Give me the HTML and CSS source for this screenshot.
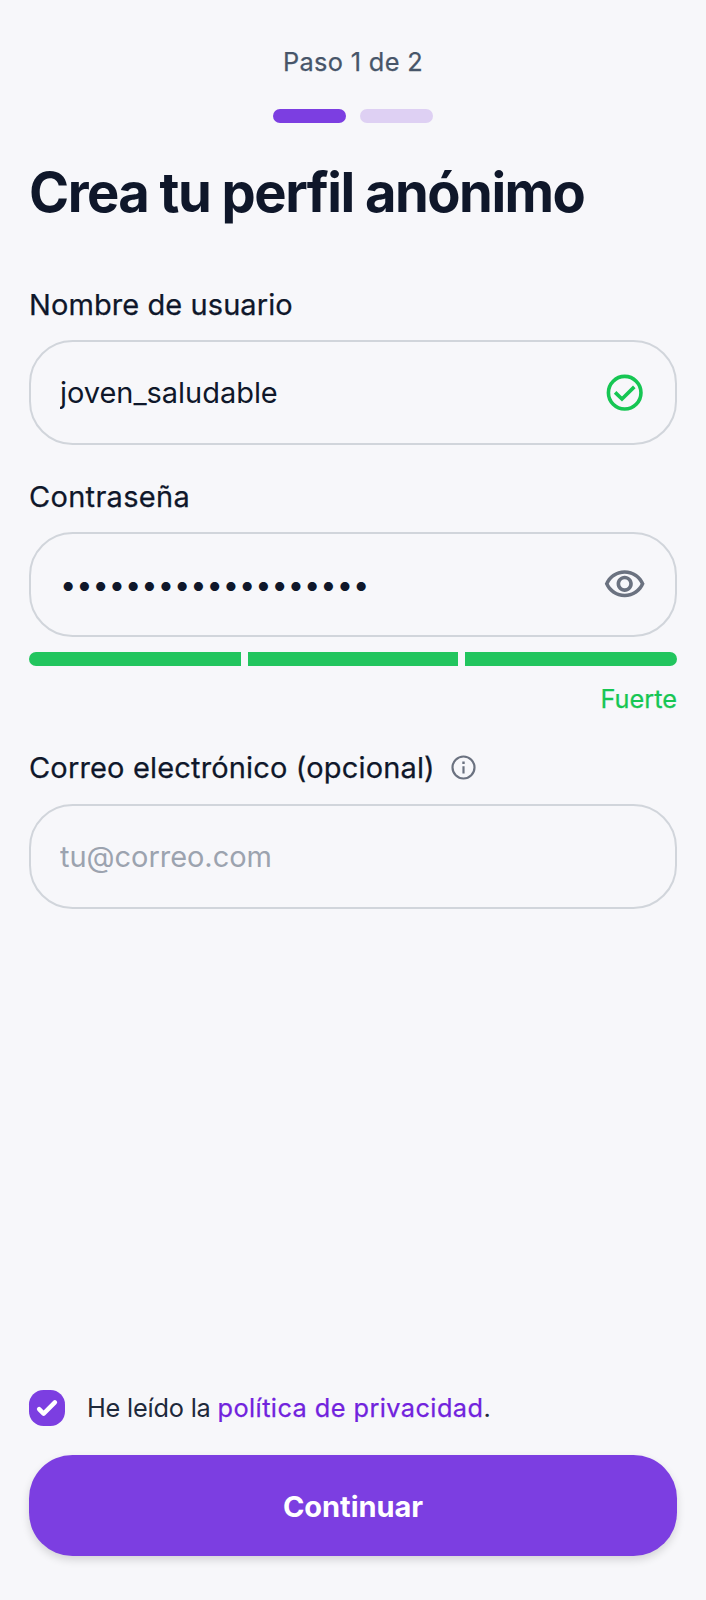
FILE: index.html
```html
<!DOCTYPE html>
<html lang="es">
<head>
<meta charset="utf-8">
<title>Crea tu perfil anónimo</title>
<link rel="stylesheet" href="styles.css">
</head>
<body>
<main class="screen">
  <header class="steps">
    <p class="steps-label">Paso 1 de 2</p>
    <div class="steps-bars"><i class="step active"></i><i class="step"></i></div>
  </header>
  <h1 class="title">Crea tu perfil anónimo</h1>
  <form class="form">
    <div class="field">
      <label class="label label-user" for="user">Nombre de usuario</label>
      <div class="control">
        <input class="input" id="user" type="text" value="joven_saludable">
        <svg class="icon valid" viewBox="0 0 24 24"><circle cx="12" cy="12" r="9" fill="none" stroke="currentColor" stroke-width="2"/><path d="M6.700 11.800 10.500 15.500 17.300 8.800" fill="none" stroke="currentColor" stroke-width="2"/></svg>
      </div>
    </div>
    <div class="field">
      <label class="label" for="pass">Contraseña</label>
      <div class="control">
        <input class="input" id="pass" type="password" value="micontrasenasegura1">
        <svg class="icon eye" viewBox="0 0 24 24"><path fill="currentColor" d="M12 6c3.790 0 7.170 2.130 8.820 5.500C19.170 14.870 15.790 17 12 17s-7.170-2.130-8.820-5.500C4.830 8.130 8.210 6 12 6m0-2C7 4 2.730 7.110 1 11.500 2.730 15.890 7 19 12 19s9.270-3.110 11-7.500C21.270 7.110 17 4 12 4zm0 5a2.500 2.500 0 0 1 0 5 2.500 2.500 0 0 1 0-5m0-2c-2.480 0-4.500 2.020-4.500 4.500S9.520 16 12 16s4.500-2.020 4.500-4.500S14.480 7 12 7z"/></svg>
      </div>
      <div class="strength"><i></i><i></i><i></i></div>
      <p class="strength-label">Fuerte</p>
    </div>
    <div class="field">
      <label class="label label-mail" for="mail">Correo electrónico (opcional)
        <svg class="info" viewBox="0 0 24 24"><circle cx="12" cy="12" r="9.100" fill="none" stroke="currentColor" stroke-width="1.800"/><path fill="currentColor" d="M11.100 11h1.800v6h-1.800zM11 7h2v2h-2z"/></svg>
      </label>
      <div class="control"><input class="input input-mail" id="mail" type="email" placeholder="tu@correo.com"></div>
    </div>
  </form>
  <footer class="footer">
    <div class="consent">
      <span class="checkbox"><svg viewBox="0 0 16 16"><path fill="#fff" d="M12.207 4.793a1 1 0 0 1 0 1.414l-5 5a1 1 0 0 1-1.414 0l-2-2a1 1 0 0 1 1.414-1.414L6.500 9.086l4.293-4.293a1 1 0 0 1 1.414 0z"/></svg></span>
      <p class="consent-text">He leído la <a class="link">política de privacidad</a>.</p>
    </div>
    <button class="submit" type="button">Continuar</button>
  </footer>
</main>
</body>
</html>
```
FILE: styles.css
```css
* { box-sizing: border-box; }
body { margin: 0; background: #f7f7fa; font-family: Inter, "Liberation Sans", sans-serif; color: #0f172a; }
p, h1 { margin: 0; }
i { display: block; }
.screen { height: 1600px; padding: 44px 29px 44px; display: flex; flex-direction: column; }
.steps { display: flex; flex-direction: column; align-items: center; gap: 28px; }
.steps-label { font-size: 25.3px; line-height: 36.5px; font-weight: 400; color: #475569; letter-spacing: .35px; }
.steps-label, .label, .strength-label, .link { -webkit-text-stroke: .25px currentColor; }
.steps-bars { display: flex; gap: 14.5px; }
.step { width: 72.5px; height: 14.5px; border-radius: 8px; background: #ded0f3; }
.step.active { background: #7c3ee1; }
.title { margin-top: 34.5px; font-size: 54.3px; line-height: 68px; font-weight: 700; letter-spacing: -1.52px; white-space: nowrap; }
.form { display: flex; flex-direction: column; gap: 29px; margin-top: 57.5px; }
.field { display: flex; flex-direction: column; }
.label { display: flex; align-items: center; gap: 14px; height: 43px; margin-bottom: 14px; font-size: 29px; line-height: 43px; font-weight: 400; letter-spacing: .3px; white-space: nowrap; }
.label-user { letter-spacing: .08px; }
.label-mail { letter-spacing: .16px; }
.field + .field .label { height: 44px; line-height: 44px; padding-top: 1px; }
.control { display: flex; align-items: center; height: 105px; border: 2px solid #d1d5db; border-radius: 43.5px; padding: 0 29px; }
.input { flex: 1; min-width: 0; height: 44px; border: 0; padding: 0; background: none; outline: 0; font: 400 29px/44px Inter, "Liberation Sans", sans-serif; letter-spacing: -.04px; color: #0f172a; }
.input-mail { height: 45px; padding-top: 1px; }
.input::placeholder { color: #9ca3af; opacity: 1; }
.icon { width: 43.4px; height: 43.4px; flex: none; }
.valid { color: #16c653; }
.eye { color: #6b7280; }
.strength { display: grid; grid-template-columns: 212px 1fr 212px; gap: 7px; height: 14.5px; margin-top: 14.5px; border-radius: 8px; overflow: hidden; }
.strength i { background: #22c55e; }
.strength-label { margin-top: 14.5px; text-align: right; font-size: 25.3px; line-height: 36px; font-weight: 400; color: #16c653; }
.info { width: 29px; height: 29px; margin-bottom: 2px; color: #6b7280; }
.footer { margin-top: auto; display: flex; flex-direction: column; gap: 29px; }
.consent { display: flex; align-items: center; gap: 22px; height: 36px; }
.checkbox { width: 36px; height: 36px; border-radius: 14.5px; background: #7c3ee1; }
.checkbox svg { display: block; width: 36px; height: 36px; }
.consent-text { font-size: 25.3px; line-height: 36px; letter-spacing: -.2px; color: #1e293b; white-space: nowrap; }
.link { color: #7122dd; font-weight: 400; letter-spacing: .44px; }
.submit { height: 101px; padding: 2px 0 0; border: 0; border-radius: 43.5px; background: #7c3ee1; color: #fff; font: 700 29px/44px Inter, "Liberation Sans", sans-serif; letter-spacing: -.05px; box-shadow: 0 4px 9px rgba(0,0,0,.14); }
```
